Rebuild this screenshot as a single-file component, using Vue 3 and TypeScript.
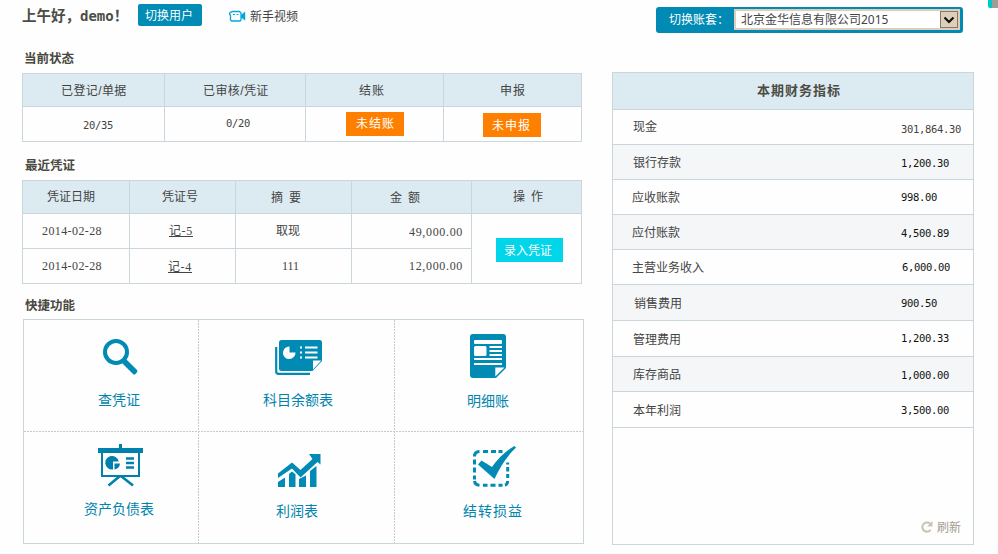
<script setup lang="ts">
import { ref } from 'vue'

interface Voucher {
  date: string
  no: string
  summary: string
  amount: string
}

interface Indicator {
  name: string
  value: string
}

const company = ref<string>('北京金华信息有限公司2015')

const statusHeads: string[] = ['已登记/单据', '已审核/凭证', '结账', '申报']
const voucherHeads: string[] = ['凭证日期', '凭证号', '摘 要', '金 额', '操 作']

const vouchers: Voucher[] = [
  { date: '2014-02-28', no: '记-5', summary: '取现', amount: '49,000.00' },
  { date: '2014-02-28', no: '记-4', summary: '111', amount: '12,000.00' },
]

const indicators: Indicator[] = [
  { name: '现金', value: '301,864.30' },
  { name: '银行存款', value: '1,200.30' },
  { name: '应收账款', value: '998.00' },
  { name: '应付账款', value: '4,500.89' },
  { name: '主营业务收入', value: '6,000.00' },
  { name: '销售费用', value: '900.50' },
  { name: '管理费用', value: '1,200.33' },
  { name: '库存商品', value: '1,000.00' },
  { name: '本年利润', value: '3,500.00' },
]
</script>

<template>
  <div class="page">
    <main class="left">
      <header class="greet">
        <span class="hello">上午好，<b>demo</b>！</span>
        <button class="switch-user">切换用户</button>
        <a class="video">
          <svg width="17" height="12" viewBox="0 0 17 12">
            <path d="M3.500 1.500h7l1.500 1.500v7l-1 1H2.500l-1-1V5.500L.7 4.500V3z" fill="#fff" stroke="#00a9d6" stroke-width="1.300" />
            <path d="M12 5l4.200-3.500v9L12 7.500z" fill="#00a9d6" />
            <path d="M4 4.500h2M7.500 4.500h2" stroke="#00a9d6" stroke-width="1" />
          </svg>
          <span>新手视频</span>
        </a>
      </header>

      <h2 class="title status-title">当前状态</h2>
      <section class="grid status">
        <div v-for="h in statusHeads" :key="h" class="cell head">{{ h }}</div>
        <div class="cell num">20/35</div>
        <div class="cell num">0/20</div>
        <div class="cell"><button class="todo">未结账</button></div>
        <div class="cell"><button class="todo report">未申报</button></div>
      </section>

      <h2 class="title recent-title">最近凭证</h2>
      <section class="grid recent">
        <div v-for="h in voucherHeads" :key="h" class="cell head">{{ h }}</div>
        <div class="cell action"><button class="entry">录入凭证</button></div>
        <template v-for="v in vouchers" :key="v.no">
          <div class="cell date">{{ v.date }}</div>
          <div class="cell no"><a>{{ v.no }}</a></div>
          <div class="cell summary">{{ v.summary }}</div>
          <div class="cell amount">{{ v.amount }}</div>
        </template>
      </section>

      <h2 class="title quick-title">快捷功能</h2>
      <section class="quick">
        <a class="tile search">
          <svg width="36" height="37" viewBox="0 0 36 37">
            <circle cx="13" cy="13" r="11" fill="none" stroke="#008ab4" stroke-width="4" />
            <path d="M21 21.500l2.200-1.200L34 31q1 1.200-.2 2.500l-1.300 1.400q-1.300 1-2.500 0L19.500 24.500z" fill="#008ab4" />
          </svg>
          <span>查凭证</span>
        </a>
        <a class="tile balance">
          <svg width="48" height="36" viewBox="0 0 48 36">
            <path d="M1.200 7v24.500q0 2.300 2.300 2.300H35" fill="none" stroke="#008ab4" stroke-width="2.200" />
            <path d="M6.500 0h38q2.500 0 2.500 2.500V21l-9.500 10h-31Q4 31 4 28.500V2.500Q4 0 6.500 0z" fill="#008ab4" />
            <path d="M38 20.500h8.300L38 29.500z" fill="#fff" />
            <path d="M14.500 6.500v6h6a6.300 6.300 0 1 1-6-6z" fill="#fff" />
            <path d="M25 7.500h2M25 12.500h2M25 17.500h2M30 7.500h12.500M30 12.500h12.500M30 17.500h12.500" stroke="#fff" stroke-width="2" />
          </svg>
          <span>科目余额表</span>
        </a>
        <a class="tile detail">
          <svg width="36" height="44" viewBox="0 0 36 44">
            <path d="M3 0h30q3 0 3 3v31L26 44H3q-3 0-3-3V3q0-3 3-3z" fill="#008ab4" />
            <path d="M25.300 33.500h9.200l-9.200 9z" fill="#fff" />
            <rect x="4" y="6" width="28" height="4" rx="1" fill="#fff" />
            <rect x="4" y="12" width="12.500" height="10" rx="1.500" fill="#fff" />
            <path d="M19.500 13h12.500M19.500 17h12.500M19.500 21h12.500M4 25h28M4 30h28" stroke="#fff" stroke-width="2" />
          </svg>
          <span>明细账</span>
        </a>
        <a class="tile assets">
          <svg width="45" height="43" viewBox="0 0 45 43">
            <path d="M21 0h3v4h-3zM0 4h45v5H0z" fill="#0080aa" />
            <path d="M4 9v23h37V9" fill="none" stroke="#0080aa" stroke-width="2" />
            <path d="M22 32L10.500 41.500M23 32l12 9.500" stroke="#0080aa" stroke-width="2.600" />
            <path d="M15 19V25.500A6.800 6.800 0 1 1 20.700 17.500H15z" fill="#0080aa" />
            <path d="M16.500 19.500h5.500q-.5 5-5.500 6z" fill="#0080aa" />
            <path d="M28 14.500h8M28 19h8M28 23.500h8" stroke="#0080aa" stroke-width="2.600" />
          </svg>
          <span>资产负债表</span>
        </a>
        <a class="tile profit">
          <svg width="43" height="34" viewBox="0 0 43 34">
            <path d="M0 19.500L14 8.500l8.500 7.500L34.500 5 31 0h11.500v10.500l-3-2.500L22.500 23.500l-8.500-9L0 24z" fill="#008ab4" />
            <path d="M0 28l7-4.500V33H0zM11 20l3-2.500 3.500 2.800V33H11zM21 25l7-3.500V33h-7zM32 17l6.500-5V33H32z" fill="#008ab4" />
          </svg>
          <span>利润表</span>
        </a>
        <a class="tile carry">
          <svg width="44" height="41" viewBox="0 0 44 41">
            <path d="M1.500 10.500Q1.500 5.500 6.500 5.500M10 5.500h5M18 5.500h5M25.500 5.500h4M1.500 13.500v5M1.500 21.500v5M1.500 29.500v4M1.500 35Q2 39 6.500 39.200M10 39.200h4.500M17.500 39.200h5M25.500 39.200h4M32 39.200Q34.500 38.500 34.700 35M34.700 32v-4M34.700 25.500V21M34.700 18.500v-2" fill="none" stroke="#008ab4" stroke-width="3" />
            <path d="M5 18.500l3.500-4L19 21Q29 7 41.500 0l1.500 1.500Q30 14 21.500 33z" fill="#008ab4" />
          </svg>
          <span>结转损益</span>
        </a>
      </section>
    </main>

    <aside class="right">
      <div class="account">
        <span class="account-label">切换账套：</span>
        <div class="select">
          <span>{{ company }}</span>
          <i class="arrow">
            <svg width="12" height="8" viewBox="0 0 12 8"><path d="M1.500 1.500L6 6l4.500-4.500" fill="none" stroke="#111" stroke-width="2.200" /></svg>
          </i>
        </div>
      </div>
      <section class="panel">
        <h3>本期财务指标</h3>
        <div v-for="item in indicators" :key="item.name" class="row">
          <span class="name">{{ item.name }}</span>
          <span class="value">{{ item.value }}</span>
        </div>
        <footer>
          <svg width="12" height="12" viewBox="0 0 12 12">
            <path d="M9.600 8.800A4.600 4.600 0 1 1 9 2.600" fill="none" stroke="#cbc2b6" stroke-width="2" />
            <path d="M11.500 0v5.500H6z" fill="#cbc2b6" />
          </svg>
          <span>刷新</span>
        </footer>
      </section>
    </aside>
    <div class="corner"></div>
  </div>
</template>

<style>
body {
  margin: 0;
  background: #fff;
}
</style>

<style scoped>
.page {
  position: relative;
  display: flex;
  box-sizing: border-box;
  width: 998px;
  height: 554px;
  padding-left: 22px;
  overflow: hidden;
  background: #fefefe;
  color: #444;
  font: 12px/18px "Liberation Sans", "Noto Sans CJK SC", sans-serif;
  white-space: nowrap;
}
.left {
  width: 562px;
  margin-right: 28px;
}
button {
  display: block;
  box-sizing: border-box;
  margin: 0;
  padding: 0;
  border: 0;
  color: #fff;
  font: inherit;
  text-align: left;
}
.greet {
  display: flex;
  height: 47px;
}
.hello {
  width: 116px;
  padding-top: 7px;
  font-size: 14.500px;
  font-weight: bold;
  color: #4c4c46;
}
.hello b {
  font-family: "DejaVu Sans Mono", monospace;
  font-size: 14px;
}
.switch-user {
  width: 64px;
  height: 22px;
  margin-top: 4px;
  padding: 2px 0 0 7px;
  border-radius: 2px;
  background: #008cb5;
}
.video {
  display: flex;
  padding: 8px 0 0 27px;
}
.video svg {
  margin: 2px 4px 0 0;
}
.title {
  margin: 0;
  font-size: 12.500px;
  font-weight: bold;
  line-height: 18px;
  color: #484840;
}
.status-title {
  height: 23px;
  padding: 3px 0 0 2px;
}
.recent-title {
  height: 23px;
  padding: 15px 0 0 3px;
}
.quick-title {
  height: 22px;
  padding: 13px 0 0 3px;
}
.grid {
  display: grid;
  gap: 1px;
  box-sizing: border-box;
  width: 560px;
  padding: 1px;
  background: #cad6d9;
}
.cell {
  box-sizing: border-box;
  background: #fefefe;
}
.head {
  background: #dcebf2;
}
.num,
.value {
  font-family: "DejaVu Sans Mono", monospace;
  font-size: 10.500px;
  letter-spacing: -0.320px;
}
.date,
.amount {
  font-family: "Liberation Serif", serif;
  font-size: 12px;
  letter-spacing: 0.400px;
}
.status {
  grid-template: 32px 34px / 141px 140px 137px 137px;
}
.status .head {
  padding: 8px 0 0 38px;
  letter-spacing: 0.400px;
}
.status .head:nth-child(3) {
  padding-left: 53px;
  letter-spacing: 1px;
}
.status .head:nth-child(4) {
  padding-left: 56px;
  letter-spacing: 1px;
}
.status .num:nth-child(5) {
  padding: 9px 0 0 60px;
}
.status .num:nth-child(6) {
  padding: 7px 0 0 61px;
}
.status .cell:nth-child(7) {
  padding: 5px 0 0 40px;
}
.status .cell:nth-child(8) {
  padding: 6px 0 0 39px;
}
.todo {
  width: 58px;
  height: 24px;
  padding-left: 10px;
  background: #ff7f00;
  letter-spacing: 1px;
}
.report {
  padding: 2px 0 0 9px;
}
.recent {
  grid-template: 32px 34px 34px / 106px 105px 115px 119px 109px;
}
.recent .head {
  padding-top: 7px;
}
.recent .head:nth-child(1) {
  padding-left: 24px;
}
.recent .head:nth-child(2) {
  padding-left: 32px;
}
.recent .head:nth-child(3) {
  padding: 8px 0 0 35px;
  word-spacing: 2.600px;
}
.recent .head:nth-child(4) {
  padding: 8px 0 0 38px;
  word-spacing: 2.600px;
}
.recent .head:nth-child(5) {
  padding-left: 41px;
  word-spacing: 2.600px;
}
.action {
  grid-area: 2 / 5 / 4 / 6;
  padding: 24px 0 0 24px;
}
.entry {
  width: 67px;
  height: 24px;
  padding: 2px 0 0 8px;
  background: #00d5ea;
}
.date {
  padding: 8px 0 0 19px;
}
.no {
  padding: 8px 0 0 39px;
  font-family: "Liberation Serif", "Noto Sans CJK SC", serif;
  letter-spacing: 0.600px;
}
.no a {
  display: block;
  width: 24px;
  height: 14px;
  border-bottom: 1px solid #444;
}
.summary {
  padding: 8px 0 0 40px;
}
.amount {
  padding: 9px 0 0 57px;
  letter-spacing: 0.670px;
}
.date ~ .date ~ .no {
  padding: 9px 0 0 38px;
}
.date ~ .date ~ .summary {
  padding-left: 46px;
  font-family: "Liberation Serif", serif;
}
.date ~ .date ~ .amount {
  padding-top: 8px;
}
.quick {
  display: grid;
  grid-template: 111px 111px / 174px 195px 188px;
  gap: 1px;
  box-sizing: border-box;
  width: 561px;
  margin-left: 1px;
  border: 1px solid #cad6d5;
  background:
    repeating-linear-gradient(90deg, #cfc9c1 0 2px, #fefefe 2px 3px) 0 111px / 100% 1px no-repeat,
    repeating-linear-gradient(#cfc9c1 0 2px, #fefefe 2px 3px) 174px 0 / 1px 100% no-repeat,
    repeating-linear-gradient(#cfc9c1 0 2px, #fefefe 2px 3px) 370px 0 / 1px 100% no-repeat;
}
.tile {
  display: flex;
  flex-direction: column;
  align-items: flex-start;
  justify-content: space-between;
  box-sizing: border-box;
  color: #0084ad;
  font-size: 14px;
}
.search {
  padding: 19px 0 22px 74px;
}
.search svg {
  margin-left: 5px;
}
.balance {
  padding: 20px 0 22px 64px;
}
.balance svg {
  margin-left: 12px;
}
.detail {
  padding: 14px 0 21px 72px;
}
.detail svg {
  margin-left: 3px;
}
.assets {
  padding: 12px 0 25px 60px;
}
.assets svg {
  margin-left: 14px;
}
.profit {
  padding: 22px 0 23px 77px;
}
.profit svg {
  margin-left: 2px;
}
.carry {
  padding: 14px 0 23px 68px;
  letter-spacing: 1px;
}
.carry svg {
  margin-left: 10px;
}
.right {
  width: 362px;
}
.account {
  display: flex;
  box-sizing: border-box;
  width: 307px;
  height: 26px;
  margin: 7px 0 39px 44px;
  padding: 2px 3px 3px 13px;
  border-radius: 3px;
  background: #008ab4;
}
.account-label {
  width: 65px;
  padding-top: 2px;
  color: #fff;
}
.select {
  display: flex;
  justify-content: space-between;
  box-sizing: border-box;
  width: 226px;
  height: 21px;
  padding-left: 5px;
  border: 2px solid #dfcfba;
  background: #fff;
  font-family: "Noto Sans", "Noto Sans CJK SC", sans-serif;
  line-height: 17px;
}
.arrow {
  display: flex;
  align-items: center;
  justify-content: center;
  box-sizing: border-box;
  width: 18px;
  height: 17px;
  border: 1px solid #85796c;
  background: #dfcfba;
}
.panel {
  display: grid;
  grid-template-rows: 36px repeat(5, 34px) 35px 35px 34px 35px 116px;
  gap: 1px;
  box-sizing: border-box;
  height: 473px;
  padding: 1px;
  background: #cad6d9;
}
.panel h3 {
  margin: 0;
  padding: 9px 0 0 144px;
  background: #dcebf2;
  font-size: 13px;
  line-height: 18px;
  letter-spacing: 1px;
  color: #4c4c44;
}
.row {
  display: flex;
  padding-left: 20px;
  background: #fefefe;
}
.row:nth-child(odd) {
  background: #f4f6f8;
}
.name {
  width: 268px;
  padding-top: 9px;
}
.value {
  padding-top: 9px;
  color: #111;
}
.row:nth-child(2) .name {
  padding-top: 8px;
}
.row:nth-child(2) .value {
  padding-top: 10px;
  color: #444;
}
.row:nth-child(4),
.row:nth-child(5),
.row:nth-child(6) {
  padding-left: 19px;
}
.row:nth-child(4) .value,
.row:nth-child(6) .value,
.row:nth-child(8) .value {
  padding-top: 8px;
}
.row:nth-child(4) .value,
.row:nth-child(5) .value {
  padding-left: 1px;
}
.row:nth-child(6) .value {
  padding-left: 2px;
}
.row:nth-child(7) .name {
  padding: 10px 0 0 1px;
  width: 267px;
}
.row:nth-child(8) .name,
.row:nth-child(10) .name {
  padding-top: 10px;
}
footer {
  display: flex;
  padding: 91px 0 0 308px;
  background: #fefefe;
  color: #a59b90;
}
footer svg {
  margin: 2px 4px 0 0;
}
.corner {
  position: absolute;
  top: 0;
  right: 0;
  box-sizing: border-box;
  width: 10px;
  height: 8px;
  border-left: 4px solid #00c8c8;
  border-bottom-left-radius: 2px;
  background: #a09c98;
}
</style>
